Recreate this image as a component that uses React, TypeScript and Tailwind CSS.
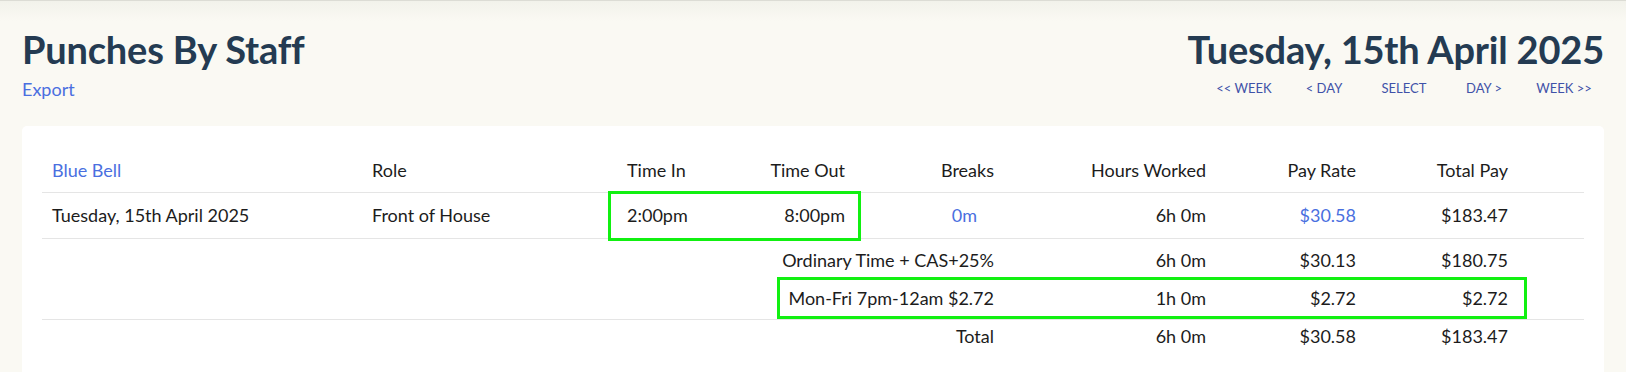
import React from 'react';

const navLinks = ['<< WEEK', '< DAY', 'SELECT', 'DAY >', 'WEEK >>'];

const subRows = [
  { label: 'Ordinary Time + CAS+25%', hours: '6h 0m', rate: '$30.13', total: '$180.75', row: 'h-[40px]', cell: 'pt-[4px]' },
  { label: 'Mon-Fri 7pm-12am $2.72', hours: '1h 0m', rate: '$2.72', total: '$2.72', row: 'h-[41px] border-b border-[#e5e5e5]', cell: '' },
  { label: 'Total', hours: '6h 0m', rate: '$30.58', total: '$183.47', row: 'h-[34px]', cell: '' },
];

export default function App() {
  return (
    <div
      className="relative min-h-screen bg-[#faf9f3] text-[#1c1c1c]"
      style={{ fontFamily: 'Lato, "Noto Sans", sans-serif' }}
    >
      <div className="h-[1px] bg-[#dcdcd5]" />
      <div className="h-[20px] -mb-[20px] bg-gradient-to-b from-[#f2f2eb] to-[#faf9f3]" />

      {/* header */}
      <div className="relative flex justify-between px-[22px] pt-[24px]">
        <div>
          <h1 className="text-[38px] font-bold leading-[48px] tracking-[-0.005em] text-[#243b52]">Punches By Staff</h1>
          <a className="mt-[4px] block text-[18px] leading-[24px] text-[#4a6fe0]">Export</a>
        </div>
        <div className="flex flex-col items-end">
          <h1 className="text-[38px] font-bold leading-[48px] tracking-[-0.005em] text-[#243b52]">Tuesday, 15th April 2025</h1>
          <div className="mt-[6px] grid w-[400px] grid-cols-5 text-center text-[13px] leading-[18px] text-[#3f52a8]">
            {navLinks.map((l) => (
              <a key={l}>{l}</a>
            ))}
          </div>
        </div>
      </div>

      {/* card */}
      <div className="mx-[22px] mt-[25px] rounded-[5px] bg-white px-5 pb-6 pt-5">
        <table className="w-full table-fixed border-collapse text-[18px]">
          <colgroup>
            <col className="w-[320px]" />
            <col className="w-[255px]" />
            <col className="w-[119px]" />
            <col className="w-[119px]" />
            <col className="w-[149px]" />
            <col className="w-[212px]" />
            <col className="w-[150px]" />
            <col className="w-[152px]" />
            <col className="w-[66px]" />
          </colgroup>
          <thead>
            <tr className="h-[46px] border-b border-[#e5e5e5]">
              <th className="px-[10px] pt-[4px] text-left font-normal text-[#4a6fe0]">Blue Bell</th>
              <th className="px-[10px] pt-[4px] text-left font-normal">Role</th>
              <th className="px-[10px] pt-[4px] text-left font-normal">Time In</th>
              <th className="px-[10px] pt-[4px] text-right font-normal">Time Out</th>
              <th className="px-[10px] pt-[4px] text-right font-normal">Breaks</th>
              <th className="px-[10px] pt-[4px] text-right font-normal">Hours Worked</th>
              <th className="px-[10px] pt-[4px] text-right font-normal">Pay Rate</th>
              <th className="px-[10px] pt-[4px] text-right font-normal">Total Pay</th>
              <th />
            </tr>
          </thead>
          <tbody>
            <tr className="h-[46px] border-b border-[#e5e5e5]">
              <td className="px-[10px]">Tuesday, 15th April 2025</td>
              <td className="px-[10px]">Front of House</td>
              <td className="px-[10px]">2:00pm</td>
              <td className="px-[10px] text-right">8:00pm</td>
              <td className="px-[10px] text-right">
                <a className="pr-[17px] text-[#4a6fe0]">0m</a>
              </td>
              <td className="px-[10px] text-right">6h 0m</td>
              <td className="px-[10px] text-right text-[#4a6fe0]">$30.58</td>
              <td className="px-[10px] text-right">$183.47</td>
              <td />
            </tr>
            {subRows.map((r) => (
              <tr key={r.label} className={r.row}>
                <td colSpan={5} className={`px-[10px] text-right ${r.cell}`}>{r.label}</td>
                <td className={`px-[10px] text-right ${r.cell}`}>{r.hours}</td>
                <td className={`px-[10px] text-right ${r.cell}`}>{r.rate}</td>
                <td className={`px-[10px] text-right ${r.cell}`}>{r.total}</td>
                <td />
              </tr>
            ))}
          </tbody>
        </table>
      </div>

      {/* highlight annotations */}
      <div className="pointer-events-none absolute left-[608px] top-[191px] h-[50px] w-[253px] border-[3px] border-[#11f011]" />
      <div className="pointer-events-none absolute left-[777px] top-[277px] h-[42px] w-[750px] border-[3px] border-[#11f011]" />
    </div>
  );
}
